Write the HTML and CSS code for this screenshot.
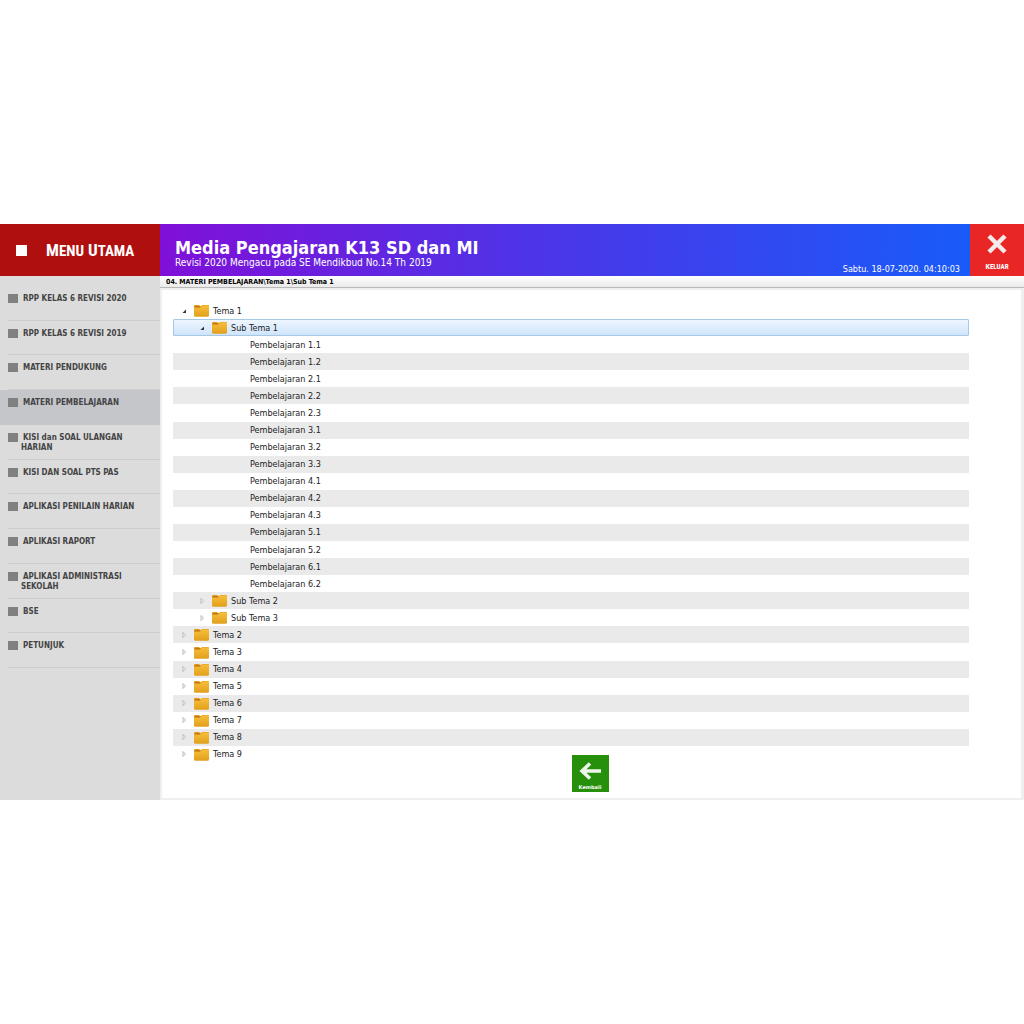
FILE: index.html
```html
<!DOCTYPE html>
<html lang="id">
<head>
  <meta charset="UTF-8">
  <meta name="viewport" content="width=device-width, initial-scale=1.0">
  <title>Media Pengajaran K13 SD dan MI</title>
  <link rel="stylesheet" href="styles.css">
</head>
<body>
  <svg class="sprite" aria-hidden="true">
    <defs>
      <linearGradient id="folder-fill" x1="0" y1="0" x2="0" y2="1">
        <stop offset="0" stop-color="#f6bf3c"/>
        <stop offset="1" stop-color="#e2a01c"/>
      </linearGradient>
    </defs>
    <symbol id="folder" viewBox="0 0 15 13">
      <path d="M0 2Q0 1 1 1H5L6 2H7L8 1H14Q15 1 15 2V11Q15 12.500 13.500 12.500H1.500Q0 12.500 0 11Z" fill="#e09a1c"/>
      <path d="M0 4H6L8 1.500H15V11Q15 12.500 13.500 12.500H1.500Q0 12.500 0 11Z" fill="url(#folder-fill)"/>
      <path d="M1 2.700H6" stroke="#c0721c" stroke-width="1"/>
    </symbol>
    <symbol id="open" viewBox="0 0 6 6">
      <path d="M5 1.500V5H1.500Z" fill="#333"/>
    </symbol>
    <symbol id="closed" viewBox="0 0 6 6">
      <path d="M2 .5L4.500 3L2 5.500Z" fill="#fff" stroke="#aaa" stroke-width=".8"/>
    </symbol>
  </svg>

  <div class="app">
    <aside class="sidebar">
      <h2 class="menu-title"><span class="menu-mark"></span><span class="caps">M<small>enu</small> U<small>tama</small></span></h2>
      <nav class="menu">
        <a class="menu-item" href="#"><span>RPP KELAS 6 REVISI 2020</span></a>
        <a class="menu-item" href="#"><span>RPP KELAS 6 REVISI 2019</span></a>
        <a class="menu-item" href="#"><span>MATERI PENDUKUNG</span></a>
        <a class="menu-item active" href="#"><span>MATERI PEMBELAJARAN</span></a>
        <a class="menu-item" href="#"><span>KISI dan SOAL ULANGAN HARIAN</span></a>
        <a class="menu-item" href="#"><span>KISI DAN SOAL PTS PAS</span></a>
        <a class="menu-item" href="#"><span>APLIKASI PENILAIN HARIAN</span></a>
        <a class="menu-item" href="#"><span>APLIKASI RAPORT</span></a>
        <a class="menu-item" href="#"><span>APLIKASI ADMINISTRASI SEKOLAH</span></a>
        <a class="menu-item" href="#"><span>BSE</span></a>
        <a class="menu-item" href="#"><span>PETUNJUK</span></a>
      </nav>
    </aside>

    <main class="main">
      <header class="header">
        <div class="heading">
          <h1>Media Pengajaran K13 SD dan MI</h1>
          <p>Revisi 2020 Mengacu pada SE Mendikbud No.14 Th 2019</p>
        </div>
        <time class="clock">Sabtu. 18-07-2020. 04:10:03</time>
        <button class="exit" type="button">
          <svg width="20" height="20" viewBox="0 0 20 20" aria-hidden="true"><path d="M2 2L18 18M18 2L2 18" stroke="#f3eaea" stroke-width="4.500"/></svg>
          <span class="caps">K<small>eluar</small></span>
        </button>
      </header>

      <div class="path">04. MATERI PEMBELAJARAN\Tema 1\Sub Tema 1</div>

      <section class="panel">
        <div class="tree">
          <button class="row"><svg class="arrow"><use href="#open"/></svg><svg class="folder"><use href="#folder"/></svg>Tema 1</button>
          <button class="row sub selected"><svg class="arrow"><use href="#open"/></svg><svg class="folder"><use href="#folder"/></svg>Sub Tema 1</button>
          <button class="row leaf">Pembelajaran 1.1</button>
          <button class="row leaf">Pembelajaran 1.2</button>
          <button class="row leaf">Pembelajaran 2.1</button>
          <button class="row leaf">Pembelajaran 2.2</button>
          <button class="row leaf">Pembelajaran 2.3</button>
          <button class="row leaf">Pembelajaran 3.1</button>
          <button class="row leaf">Pembelajaran 3.2</button>
          <button class="row leaf">Pembelajaran 3.3</button>
          <button class="row leaf">Pembelajaran 4.1</button>
          <button class="row leaf">Pembelajaran 4.2</button>
          <button class="row leaf">Pembelajaran 4.3</button>
          <button class="row leaf">Pembelajaran 5.1</button>
          <button class="row leaf">Pembelajaran 5.2</button>
          <button class="row leaf">Pembelajaran 6.1</button>
          <button class="row leaf">Pembelajaran 6.2</button>
          <button class="row sub"><svg class="arrow"><use href="#closed"/></svg><svg class="folder"><use href="#folder"/></svg>Sub Tema 2</button>
          <button class="row sub"><svg class="arrow"><use href="#closed"/></svg><svg class="folder"><use href="#folder"/></svg>Sub Tema 3</button>
          <button class="row"><svg class="arrow"><use href="#closed"/></svg><svg class="folder"><use href="#folder"/></svg>Tema 2</button>
          <button class="row"><svg class="arrow"><use href="#closed"/></svg><svg class="folder"><use href="#folder"/></svg>Tema 3</button>
          <button class="row"><svg class="arrow"><use href="#closed"/></svg><svg class="folder"><use href="#folder"/></svg>Tema 4</button>
          <button class="row"><svg class="arrow"><use href="#closed"/></svg><svg class="folder"><use href="#folder"/></svg>Tema 5</button>
          <button class="row"><svg class="arrow"><use href="#closed"/></svg><svg class="folder"><use href="#folder"/></svg>Tema 6</button>
          <button class="row"><svg class="arrow"><use href="#closed"/></svg><svg class="folder"><use href="#folder"/></svg>Tema 7</button>
          <button class="row"><svg class="arrow"><use href="#closed"/></svg><svg class="folder"><use href="#folder"/></svg>Tema 8</button>
          <button class="row"><svg class="arrow"><use href="#closed"/></svg><svg class="folder"><use href="#folder"/></svg>Tema 9</button>
        </div>
        <button class="back" type="button">
          <svg width="22" height="18" viewBox="0 0 22 18" aria-hidden="true"><path d="M22 9H3M11 1.500L3 9L11 16.500" fill="none" stroke="#eef6ec" stroke-width="3.500"/></svg>
          <span>Kembali</span>
        </button>
      </section>
    </main>
  </div>
</body>
</html>
```
FILE: styles.css
```css
* {
  margin: 0;
  padding: 0;
  box-sizing: border-box;
}

body {
  min-height: 100vh;
  display: flex;
  align-items: center;
  background: #fff;
  font-family: Tahoma, "DejaVu Sans Condensed", "DejaVu Sans", sans-serif;
  color: #222;
}

button {
  border: none;
  background: none;
  font: inherit;
  color: inherit;
  cursor: pointer;
}

.sprite {
  position: absolute;
  width: 0;
  height: 0;
}

.app {
  width: 100%;
  min-height: 576px;
  display: grid;
  grid-template-columns: 160px 1fr;
}

.caps {
  font-family: "Roboto Condensed", Roboto, sans-serif;
  font-weight: bold;
  text-transform: uppercase;
  white-space: nowrap;
}

/* Sidebar */
.sidebar {
  background: #dcdcdc;
}

.menu-title {
  height: 52px;
  padding: 0 16px;
  display: flex;
  align-items: center;
  gap: 19px;
  background: #b00f0f;
  color: #fff;
  font-size: 17px;
}

.menu-title small {
  font-size: 15px;
}

.menu-mark {
  width: 11px;
  height: 11px;
  background: #fff;
}

.menu {
  min-height: 382px;
  margin-top: 10px;
  display: grid;
  grid-auto-rows: 1fr;
}

.menu-item {
  padding: 8px 8px 0;
  display: flex;
  gap: 3px;
  background: linear-gradient(#cdcdcd, #cdcdcd) right bottom / calc(100% - 8px) 1px no-repeat;
  color: #444;
  font-size: 8px;
  line-height: 10px;
  font-weight: bold;
  text-decoration: none;
}

.menu-item::before {
  content: "";
  flex: none;
  width: 10px;
  height: 9px;
  background: #808080;
}

.menu-item span {
  text-indent: 2px;
}

.menu-item.active {
  background: #c5c6ca;
}

/* Header */
.main {
  display: flex;
  flex-direction: column;
  min-width: 0;
}

.header {
  height: 52px;
  display: flex;
  background: linear-gradient(90deg, #8010d8, #4b36e8 45%, #1260fb);
  color: #fff;
}

.heading {
  flex: 1;
  padding: 14px 15px 0;
}

.heading h1 {
  font-size: 18px;
  line-height: 20px;
}

.heading p {
  font-size: 10px;
  line-height: 10px;
}

.clock {
  align-self: flex-end;
  padding: 0 10px 1px 0;
  font-size: 9px;
  line-height: 11px;
}

.exit {
  width: 54px;
  display: flex;
  flex-direction: column;
  align-items: center;
  justify-content: flex-end;
  gap: 7px;
  padding-bottom: 3px;
  background: #e92626;
  color: #fff;
  font-size: 8px;
  line-height: 11px;
}

.exit small {
  font-size: 7px;
}

.path {
  height: 12px;
  padding-left: 6px;
  border-bottom: 1px solid #b8b8b8;
  background: linear-gradient(#fff, #eaeaea);
  color: #000;
  font-size: 7px;
  line-height: 12px;
  font-weight: bold;
}

/* Content */
.panel {
  position: relative;
  flex: 1;
  padding: 12px 52px 0 11px;
  border: 2px solid #efefef;
  border-right-width: 3px;
}

.tree {
  min-height: 461px;
  display: grid;
  grid-auto-rows: 1fr;
}

.row {
  display: flex;
  align-items: center;
  padding-left: 8px;
  font-size: 9px;
  line-height: 14px;
}

.row:nth-child(even) {
  background: #eaeaea;
}

.row.sub {
  padding-left: 26px;
}

.row.leaf {
  padding-left: 77px;
}

.row.selected {
  border: 1px solid #a5c8e4;
  border-radius: 1px;
  padding-left: 25px;
  background: linear-gradient(#eef6ff, #cfe4fb);
}

.arrow {
  width: 6px;
  height: 6px;
  margin-right: 7px;
}

.folder {
  width: 15px;
  height: 13px;
  margin-right: 4px;
}

.back {
  position: absolute;
  bottom: 6px;
  left: calc(50% - 20px);
  width: 37px;
  height: 37px;
  display: flex;
  flex-direction: column;
  align-items: center;
  justify-content: flex-end;
  gap: 5px;
  padding-bottom: 2px;
  background: #26900c;
  color: #fff;
  font-family: "DejaVu Sans", sans-serif;
  font-size: 5px;
  line-height: 5px;
  font-weight: bold;
}
```
